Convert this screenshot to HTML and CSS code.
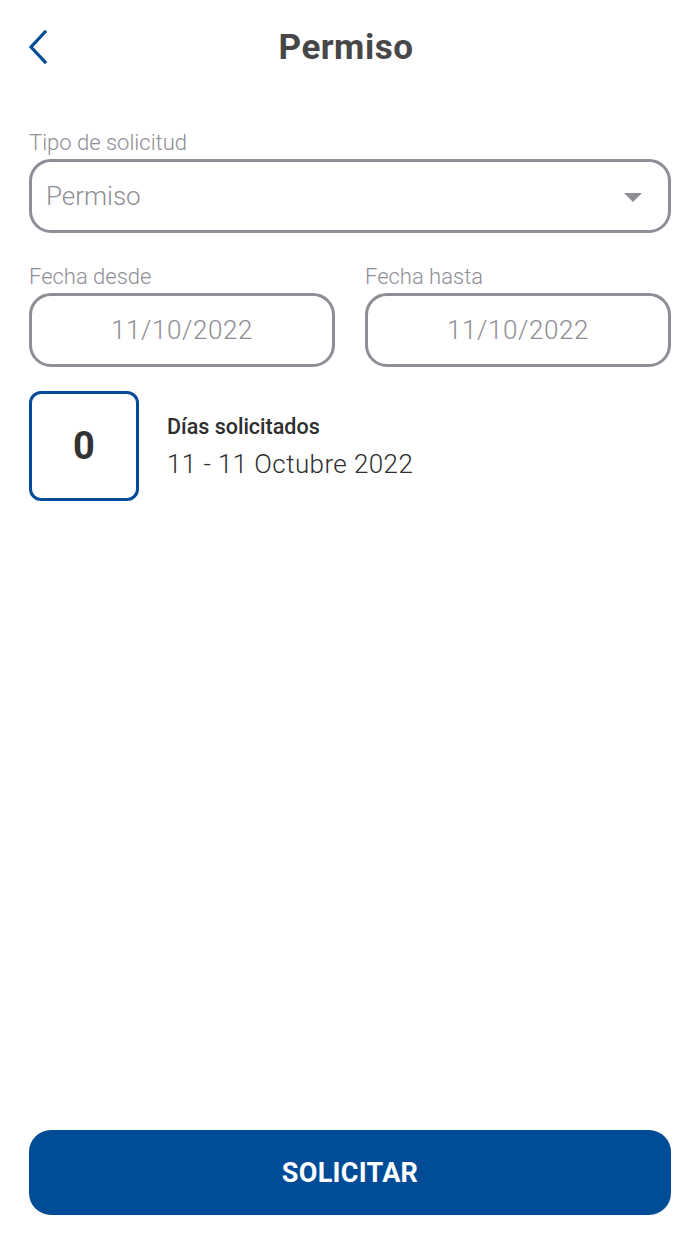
FILE: index.html
```html
<!DOCTYPE html>
<html lang="es">
<head>
<meta charset="utf-8">
<link rel="stylesheet" href="styles.css">
</head>
<body>
<div class="screen">
  <header class="topbar">
    <button class="back" aria-label="Volver">
      <svg width="22" height="34" viewBox="0 0 22 34"><path d="M18 2 L4 17 L18 32" fill="none" stroke="#004c97" stroke-width="3.2" stroke-linecap="square"/></svg>
    </button>
    <h1 class="title">Permiso</h1>
  </header>

  <main class="form">
    <div class="field">
      <label class="label">Tipo de solicitud</label>
      <div class="input select">
        <span>Permiso</span>
        <span class="caret"></span>
      </div>
    </div>

    <div class="row">
      <div class="field">
        <label class="label">Fecha desde</label>
        <div class="input date">11/10/2022</div>
      </div>
      <div class="field">
        <label class="label">Fecha hasta</label>
        <div class="input date">11/10/2022</div>
      </div>
    </div>

    <div class="summary">
      <div class="days">0</div>
      <div class="summary-text">
        <div class="summary-title">Días solicitados</div>
        <div class="summary-range">11 - 11 Octubre 2022</div>
      </div>
    </div>
  </main>

  <footer class="footer">
    <button class="submit">SOLICITAR</button>
  </footer>
</div>
</body>
</html>
```

FILE: styles.css
```css
* { box-sizing: border-box; }
html, body { margin: 0; padding: 0; background: #fff; }
body { font-family: Roboto, "Noto Sans", sans-serif; }

.screen {
  width: 700px;
  height: 1244px;
  display: flex;
  flex-direction: column;
  padding: 0 29px 0 29px;
}

.topbar {
  height: 96px;
  position: relative;
  display: flex;
  align-items: center;
  justify-content: center;
}
.back {
  position: absolute;
  left: -2px;
  top: 30px;
  background: none;
  border: 0;
  padding: 0;
  width: 22px;
  height: 34px;
}
.back svg { display: block; }
.title {
  margin: 0;
  font-size: 35px;
  font-weight: 700;
  color: #474747;
  letter-spacing: 0.5px;
  position: relative;
  top: -1px;
  left: -4px;
}

.form {
  display: flex;
  flex-direction: column;
  gap: 24px;
  padding-top: 33px;
  flex: 1;
}
.field { display: flex; flex-direction: column; }
.row .field { flex: 1; }
.label {
  font-size: 22px;
  font-weight: 300;
  color: #8e8e96;
  line-height: 28px;
  margin-bottom: 2px;
}
.input {
  height: 74px;
  border: 3px solid #8e8e96;
  border-radius: 22px;
  color: #8e8e96;
  font-weight: 300;
  display: flex;
  align-items: center;
}
.select {
  padding: 0 26px 0 14px;
  font-size: 26px;
  justify-content: space-between;
}
.caret {
  width: 0; height: 0;
  border-left: 9px solid transparent;
  border-right: 9px solid transparent;
  border-top: 9px solid #8e8e96;
  margin-top: 2px;
}
.date {
  justify-content: center;
  font-size: 26px;
  letter-spacing: 0.6px;
}
.row { display: flex; gap: 30px; margin-top: 6px; }

.summary {
  display: flex;
  align-items: center;
  gap: 28px;
}
.days {
  width: 110px;
  height: 110px;
  border: 3px solid #004c97;
  border-radius: 12px;
  display: flex;
  align-items: center;
  justify-content: center;
  font-size: 38px;
  font-weight: 700;
  color: #333;
}
.summary-text { display: flex; flex-direction: column; gap: 10px; }
.summary-title {
  font-size: 21.5px;
  font-weight: 500;
  color: #2e2e2e;
}
.summary-range {
  font-size: 26px;
  font-weight: 300;
  color: #2e2e2e;
  letter-spacing: 0.4px;
}

.footer { padding-bottom: 29px; }
.submit {
  width: 100%;
  height: 85px;
  border: 0;
  border-radius: 22px;
  background: #004c97;
  color: #fff;
  font-family: Roboto, "Noto Sans", sans-serif;
  font-size: 27px;
  font-weight: 700;
  letter-spacing: 0.3px;
}
```
